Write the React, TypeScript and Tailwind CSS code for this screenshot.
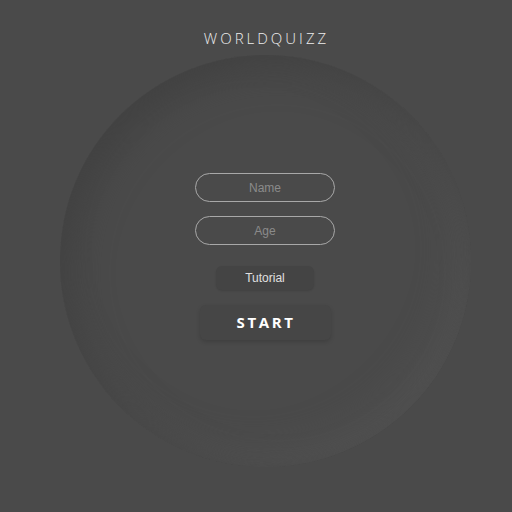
import React, { useState } from "react";

const App: React.FC = () => {
  const [name, setName] = useState("");
  const [age, setAge] = useState("");

  return (
    <div className="min-h-screen w-full bg-[#4a4a4a] pl-[18px] font-['Liberation_Sans',Arial,sans-serif]">
      <div className="flex flex-col items-center pt-[28px]">
        <h1 className="text-[15px] leading-[20px] font-light tracking-[3px] text-[#ededed] font-['Open_Sans',sans-serif] pl-[3px]">
          WORLDQUIZZ
        </h1>

        <div className="mt-[7px] flex h-[412px] w-[411px] flex-col items-center rounded-full bg-[#4a4a4a] pt-[118px] shadow-[inset_12px_12px_36px_#414141,inset_-12px_-12px_36px_#535353]">
          <input
            value={name}
            onChange={(e) => setName(e.target.value)}
            placeholder="Name"
            className="h-[29px] w-[140px] rounded-full border border-[#a8a8a8] bg-transparent text-center text-[12px] text-[#ddd] outline-none placeholder:text-[#8a8a8a]"
          />
          <input
            value={age}
            onChange={(e) => setAge(e.target.value)}
            placeholder="Age"
            className="mt-[14px] h-[29px] w-[140px] rounded-full border border-[#a8a8a8] bg-transparent text-center text-[12px] text-[#ddd] outline-none placeholder:text-[#8a8a8a]"
          />
          <button className="mt-[21px] h-[24px] w-[98px] rounded-[6px] bg-[#444444] text-[12px] text-[#e0e0e0] shadow-[0_1px_2px_rgba(0,0,0,0.12)]">
            Tutorial
          </button>
          <button className="mt-[15px] h-[35px] w-[131px] rounded-[6px] bg-[#464646] pl-[2px] text-[15px] font-bold tracking-[2.6px] text-white font-['Open_Sans',sans-serif] shadow-[0_2px_4px_rgba(0,0,0,0.15)]">
            START
          </button>
        </div>
      </div>
    </div>
  );
};

export default App;
